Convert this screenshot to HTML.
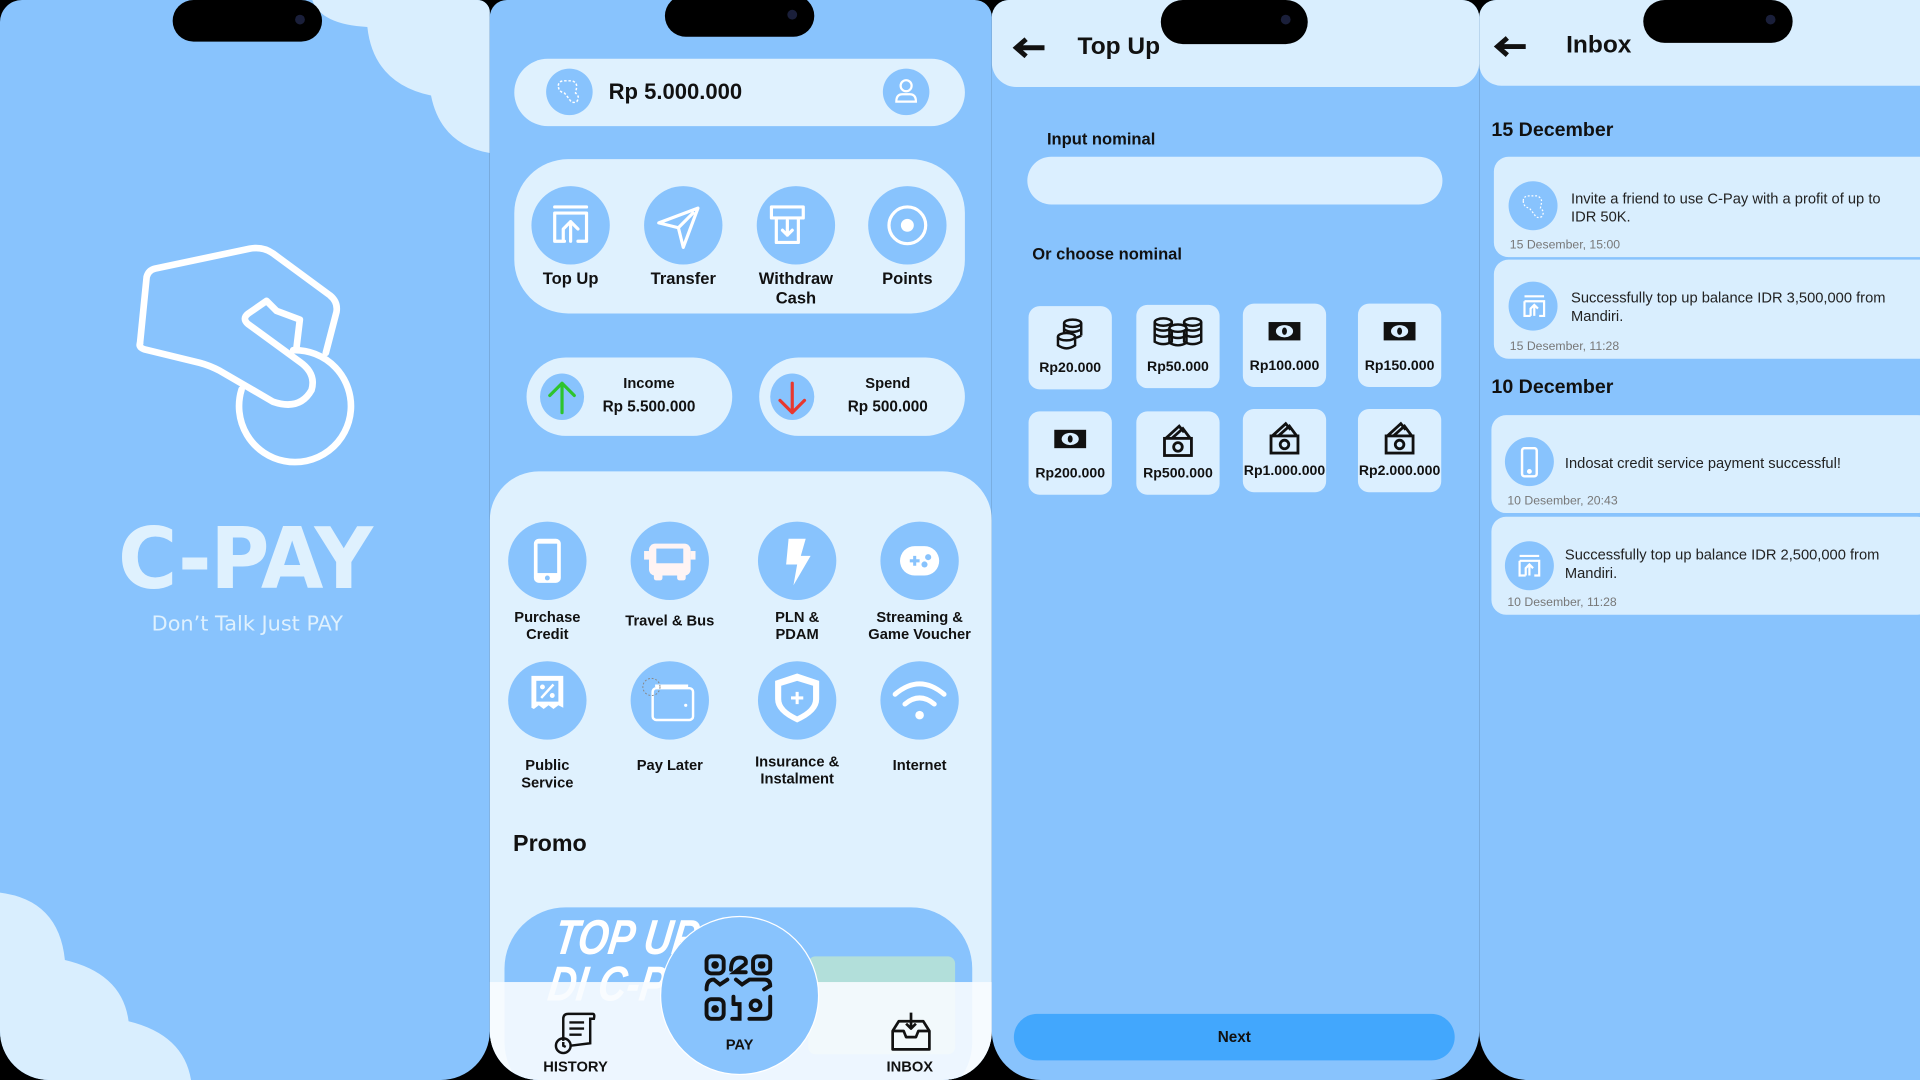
<!DOCTYPE html>
<html><head><meta charset="utf-8">
<style>
*{margin:0;padding:0;box-sizing:border-box}
html,body{width:1920px;height:1080px;overflow:hidden;background:#000;font-family:"Liberation Sans",Arial,sans-serif}
#w{position:absolute;left:0;top:0;width:1568px;height:882px;transform:scale(1.22449);transform-origin:0 0}
.a{position:absolute}
.ph{position:absolute;top:0;height:882px;background:#88c3fd;overflow:hidden}
.notch{position:absolute;background:#000;border-radius:20px;height:34px}
.notch:after{content:"";position:absolute;right:14px;top:12px;width:8px;height:8px;border-radius:50%;background:#1a1f3a}
.lt{background:#dff1fe}
.c{position:absolute;border-radius:50%;background:#88c3fd}
.lbl{position:absolute;text-align:center;font-weight:bold;color:#111;font-size:13.5px;line-height:16px}
.sl{position:absolute;text-align:center;font-weight:bold;color:#111;font-size:12px;line-height:14px}
.tile{position:absolute;width:68px;height:68px;border-radius:9px;background:#dbefff;text-align:center}
.tile span{position:absolute;left:0;right:0;bottom:11px;font-size:11.5px;font-weight:bold;color:#111}
.tile svg{position:absolute;left:20px;top:9px}
.card{position:absolute;left:12px;width:360px;background:#d9eefe;border-radius:12px}
.card .ic{position:absolute;left:12px;top:18px;width:40px;height:40px;border-radius:50%;background:#88c3fd}
.card .t{position:absolute;left:63px;font-size:12px;color:#222;line-height:15px}
.card .d{position:absolute;left:13px;bottom:4px;font-size:10px;color:#777}
.hd{font-weight:bold;color:#111}
</style></head><body><div id="w">

<!-- PHONE 1 -->
<div class="ph" style="left:0;width:400px;border-radius:18px 10px 40px 40px">
 <svg class="a" style="left:0;top:0" width="400" height="882">
  <path d="M255,0 Q262,20 300,22 Q305,68 352,78 Q360,118 400,125 L400,0Z" fill="#d9eefe"/>
  <path d="M0,729 Q48,735 53,784 Q100,795 105,834 Q150,845 156,882 L0,882Z" fill="#d9eefe"/>
 </svg>
 <div class="notch" style="left:141px;top:0;width:122px"></div>
 <svg class="a" style="left:98px;top:188px" width="204" height="196" viewBox="0 0 750 720" fill="none" stroke="#fff" stroke-width="20" stroke-linejoin="round" stroke-linecap="round">
  <path d="M60,340 L80,140 Q85,120 105,115 L390,55 Q430,48 460,70 L630,195 Q655,215 650,245 L618,368"/>
  <path d="M60,340 Q55,352 75,358 L240,398 Q270,406 300,422 L460,515 Q540,542 575,480 Q590,430 540,395 L385,282 Q365,265 385,250 L440,212 L470,242 L540,268 L530,352"/>
  <path d="M365,478 A168,168 0 1 0 520,360"/>
 </svg>
 <div class="a" style="left:0;width:400px;top:418px;text-align:center;font-family:'DejaVu Sans',sans-serif;font-weight:bold;font-size:66px;color:#dff1fe;letter-spacing:-1px;transform:scaleY(1.05)">C-PAY</div>
 <div class="a" style="left:0;width:404px;top:500px;text-align:center;font-family:'DejaVu Sans',sans-serif;font-size:17px;color:#dff1fe">Don’t Talk Just PAY</div>
</div>

<!-- PHONE 2 -->
<div class="ph" style="left:400px;width:410px;border-radius:14px 14px 40px 40px">
 <div class="notch" style="left:143px;top:-4px;width:122px"></div>
 <div class="a lt" style="left:20px;top:48px;width:368px;height:55px;border-radius:28px"></div>
 <div class="c" style="left:46px;top:56px;width:38px;height:38px"></div>
 <svg class="a" style="left:52px;top:62px" width="26" height="26" viewBox="0 0 26 26" fill="none" stroke="#fff" stroke-width="1.2" stroke-dasharray="2 1.5"><path d="M4,8 Q4,4 9,4 L15,4 Q19,5 19,9 L18,14 Q22,17 19,21 Q15,23 13,19 L9,14 Q4,13 4,8Z"/></svg>
 <div class="a" style="left:97px;top:65px;font-size:18px;font-weight:bold;color:#111">Rp 5.000.000</div>
 <div class="c" style="left:321px;top:56px;width:38px;height:38px"></div>
 <svg class="a" style="left:328px;top:62px" width="24" height="24" viewBox="0 0 24 24" fill="none" stroke="#fff" stroke-width="1.8"><circle cx="12" cy="8" r="4.5"/><path d="M4,21 Q4,15 9,15 L15,15 Q20,15 20,21Z"/></svg>

 <div class="a lt" style="left:20px;top:130px;width:368px;height:126px;border-radius:44px"></div>
 <div class="c" style="left:34px;top:152px;width:64px;height:64px"></div>
 <div class="c" style="left:126px;top:152px;width:64px;height:64px"></div>
 <div class="c" style="left:218px;top:152px;width:64px;height:64px"></div>
 <div class="c" style="left:309px;top:152px;width:64px;height:64px"></div>
 <svg class="a" style="left:34px;top:152px" width="350" height="64" fill="none" stroke="#fff" stroke-width="2.6" stroke-linecap="round" stroke-linejoin="round">
  <path d="M19,20 L45,20 M19,25 L45,25 L45,48 L38,48 M27,48 L19,48 L19,25 M26,48 L26,38 L32,32 L38,38 M32,32 L32,48" transform="translate(0,-3)"/>
  <path d="M104,30 L136,18 L124,50 L120,34Z M120,34 L132,22" />
  <path d="M196,17 L222,17 L222,26 L196,26Z M200,26 L200,46 L218,46 L218,26 M209,28 L209,40 M205,36 L209,40 L213,36"/>
  <circle cx="307" cy="32" r="15"/><circle cx="307" cy="32" r="4" fill="#fff"/>
 </svg>
 <div class="lbl" style="left:28px;width:76px;top:220px">Top Up</div>
 <div class="lbl" style="left:120px;width:76px;top:220px">Transfer</div>
 <div class="lbl" style="left:208px;width:84px;top:220px">Withdraw<br>Cash</div>
 <div class="lbl" style="left:303px;width:76px;top:220px">Points</div>

 <div class="a lt" style="left:30px;top:292px;width:168px;height:64px;border-radius:32px"></div>
 <div class="a lt" style="left:220px;top:292px;width:168px;height:64px;border-radius:32px"></div>
 <div class="c" style="left:41px;top:305px;width:36px;height:38px"></div>
 <div class="c" style="left:229px;top:305px;width:36px;height:38px"></div>
 <svg class="a" style="left:41px;top:305px" width="230" height="38" fill="none" stroke-width="2.6" stroke-linecap="round" stroke-linejoin="round">
  <path d="M18,32 L18,8 M8,18 L18,8 L28,18" stroke="#2dc42d"/>
  <path d="M206,8 L206,32 M196,22 L206,32 L216,22" stroke="#e8372e"/>
 </svg>
 <div class="lbl" style="left:80px;width:100px;top:305px;font-size:12px">Income</div>
 <div class="lbl" style="left:80px;width:100px;top:324px;font-size:12.5px">Rp 5.500.000</div>
 <div class="lbl" style="left:275px;width:100px;top:305px;font-size:12px">Spend</div>
 <div class="lbl" style="left:275px;width:100px;top:324px;font-size:12.5px">Rp 500.000</div>

 <div class="a lt" style="left:0;top:385px;width:410px;height:500px;border-radius:40px 40px 0 0"></div>
 <div class="c" style="left:15px;top:426px;width:64px;height:64px"></div>
 <div class="c" style="left:115px;top:426px;width:64px;height:64px"></div>
 <div class="c" style="left:219px;top:426px;width:64px;height:64px"></div>
 <div class="c" style="left:319px;top:426px;width:64px;height:64px"></div>
 <div class="c" style="left:15px;top:540px;width:64px;height:64px"></div>
 <div class="c" style="left:115px;top:540px;width:64px;height:64px"></div>
 <div class="c" style="left:219px;top:540px;width:64px;height:64px"></div>
 <div class="c" style="left:319px;top:540px;width:64px;height:64px"></div>
 <svg class="a" style="left:0;top:426px" width="410" height="180">
  <rect x="36" y="14" width="22" height="36" rx="4" fill="#fff"/><rect x="39" y="18" width="16" height="24" fill="#88c3fd"/><circle cx="47" cy="46" r="2" fill="#88c3fd"/>
  <rect x="130" y="18" width="34" height="26" rx="5" fill="#fff4f4"/><rect x="126" y="24" width="4" height="7" fill="#fff4f4"/><rect x="164" y="24" width="4" height="7" fill="#fff4f4"/><rect x="136" y="22" width="22" height="12" fill="#88c3fd"/><rect x="134" y="42" width="7" height="6" rx="2" fill="#fff4f4"/><rect x="153" y="42" width="7" height="6" rx="2" fill="#fff4f4"/>
  <path d="M244,14 L258,14 L254,28 L262,28 L248,52 L251,35 L242,35Z" fill="#fff"/>
  <rect x="335" y="20" width="32" height="24" rx="12" fill="#fff"/><path d="M343,32 h8 M347,28 v8" stroke="#88c3fd" stroke-width="2.5"/><circle cx="358" cy="29" r="2.5" fill="#88c3fd"/><circle cx="355" cy="35" r="2.5" fill="#88c3fd"/>
  <path d="M34,126 L60,126 L60,152 L56,150 L52,153 L48,150 L44,153 L40,150 L36,153 L34,152Z" fill="#fff"/><rect x="38" y="130" width="18" height="17" fill="#88c3fd"/><path d="M42,144 L52,133" stroke="#fff" stroke-width="2"/><circle cx="43" cy="135" r="2" fill="#fff"/><circle cx="51" cy="142" r="2" fill="#fff"/>
  <rect x="133" y="136" width="33" height="26" rx="3" fill="none" stroke="#fff" stroke-width="2"/><path d="M135,134 L162,134" stroke="#fff" stroke-width="2"/><circle cx="160" cy="150" r="1.3" fill="#fff"/><circle cx="132" cy="135" r="7" fill="none" stroke="#888" stroke-width="0.8" stroke-dasharray="1.5 1.5"/>
  <path d="M251,124 L269,130 L269,145 Q269,156 251,164 Q233,156 233,145 L233,130Z" fill="#fff"/><path d="M251,130 L264,134 L264,145 Q264,153 251,159 Q238,153 238,145 L238,134Z" fill="#88c3fd"/><path d="M246,144 h10 M251,139 v10" stroke="#fff" stroke-width="2.5"/>
  <path d="M331,141 Q351,124 371,141" fill="none" stroke="#fff" stroke-width="4" stroke-linecap="round"/><path d="M339,149 Q351,139 363,149" fill="none" stroke="#fff" stroke-width="4" stroke-linecap="round"/><circle cx="351" cy="158" r="3.5" fill="#fff"/>
 </svg>
 <div class="sl" style="left:7px;width:80px;top:497px">Purchase<br>Credit</div>
 <div class="sl" style="left:102px;width:90px;top:500px">Travel &amp; Bus</div>
 <div class="sl" style="left:211px;width:80px;top:497px">PLN &amp;<br>PDAM</div>
 <div class="sl" style="left:301px;width:100px;top:497px">Streaming &amp;<br>Game Voucher</div>
 <div class="sl" style="left:7px;width:80px;top:618px">Public<br>Service</div>
 <div class="sl" style="left:107px;width:80px;top:618px">Pay Later</div>
 <div class="sl" style="left:201px;width:100px;top:615px">Insurance &amp;<br>Instalment</div>
 <div class="sl" style="left:311px;width:80px;top:618px">Internet</div>
 <div class="a" style="left:19px;top:679px;font-size:19px;font-weight:bold;color:#111">Promo</div>

 <div class="a" style="left:12px;top:741px;width:382px;height:160px;border-radius:50px;background:#88c3fd;overflow:hidden">
  <div class="a" style="left:44px;top:6px;font-size:40px;font-weight:bold;font-style:italic;color:#fff;line-height:38px;transform:skewX(-8deg) scaleX(.8);transform-origin:0 0">TOP UP<br>DI C-PAY</div>
  <div class="a" style="left:248px;top:40px;width:120px;height:80px;background:#b2dfda;border-radius:6px"></div>
 </div>
 <div class="a" style="left:0;top:802px;width:410px;height:80px;background:rgba(248,252,255,.9)"></div>
 <div class="a" style="left:139px;top:748px;width:130px;height:130px;border-radius:50%;background:#88c3fd;border:1.5px solid #fff"></div>
 <svg class="a" style="left:574px;top:0;transform:translateX(-400px)" width="1" height="1"></svg>
 <svg class="a" style="left:174px;top:778px" width="60" height="58" fill="none" stroke="#111" stroke-width="3.2" stroke-linecap="round">
  <rect x="3" y="3" width="14" height="14" rx="4"/><circle cx="10" cy="10" r="1.5" fill="#111"/>
  <rect x="41" y="3" width="14" height="14" rx="4"/><circle cx="48" cy="10" r="1.5" fill="#111"/>
  <path d="M23,14 Q23,4 30,4 Q36,4 35,9 L26,16 L35,16"/>
  <path d="M3,30 Q3,22 9,22 L14,26 L20,22 M27,22 L32,26 L38,22 L50,22 Q55,22 55,27 L50,30"/>
  <rect x="3" y="38" width="14" height="16" rx="4"/><circle cx="10" cy="46" r="1.5" fill="#111"/>
  <path d="M25,36 L25,42 M25,42 L30,42 L30,54 L24,54"/>
  <circle cx="43" cy="43" r="4"/><path d="M55,36 L55,50 Q55,54 50,54 L38,54"/>
 </svg>
 <div class="a" style="left:139px;width:130px;top:846px;text-align:center;font-size:12px;font-weight:bold;color:#111">PAY</div>
 <svg class="a" style="left:50px;top:826px" width="40" height="36" fill="none" stroke="#111" stroke-width="2">
  <path d="M10,24 L10,6 Q10,2 14,2 L34,2 Q36,2 35,6 L32,6 L32,26 L16,28"/><path d="M15,9 h12 M15,14 h12 M15,19 h10"/><circle cx="10" cy="28" r="6"/><path d="M10,25 L10,28 L12,29"/>
 </svg>
 <div class="a" style="left:40px;width:60px;top:864px;text-align:center;font-size:12px;font-weight:bold;color:#111">HISTORY</div>
 <svg class="a" style="left:326px;top:826px" width="36" height="34" fill="none" stroke="#111" stroke-width="2.2" stroke-linejoin="round">
  <path d="M3,16 L8,8 L28,8 L33,16 L33,31 L3,31Z M3,16 L12,16 L14,21 L22,21 L24,16 L33,16"/><path d="M18,1 L18,14 M14,10 L18,14 L22,10"/>
 </svg>
 <div class="a" style="left:313px;width:60px;top:864px;text-align:center;font-size:12px;font-weight:bold;color:#111">INBOX</div>
</div>

<!-- PHONE 3 -->
<div class="ph" style="left:810px;width:398px;border-radius:14px 14px 40px 40px">
 <div class="a" style="left:0;top:0;width:398px;height:71px;background:#d9eefe;border-radius:0 0 20px 20px"></div>
 <div class="notch" style="left:138px;top:0;width:120px;height:36px"></div>
 <svg class="a" style="left:15px;top:30px" width="30" height="18"><path d="M28,9 H6 M13,2 L5,9 L13,16" stroke="#111" stroke-width="4" fill="none"/></svg>
 <div class="a hd" style="left:70px;top:27px;font-size:20px">Top Up</div>
 <div class="a hd" style="left:45px;top:106px;font-size:13.5px">Input nominal</div>
 <div class="a" style="left:29px;top:128px;width:339px;height:39px;border-radius:20px;background:#dbefff"></div>
 <div class="a hd" style="left:33px;top:200px;font-size:13.5px">Or choose nominal</div>
 <div class="tile" style="left:30px;top:250px"><svg width="28" height="28" viewBox="0 0 28 28" fill="none" stroke="#111" stroke-width="2"><ellipse cx="16" cy="5" rx="7" ry="3"/><path d="M9,5 v10 M23,5 v10 M9,10 q7,4 14,0 M9,15 q7,4 14,0"/><ellipse cx="11" cy="16" rx="7" ry="3" fill="#dbefff"/><path d="M4,16 v7 q7,5 14,0 v-7"/></svg><span>Rp20.000</span></div>
 <div class="tile" style="left:118px;top:249px"><svg style="left:10px" width="48" height="28" viewBox="0 0 48 28" fill="none" stroke="#111" stroke-width="2"><ellipse cx="12" cy="5" rx="7" ry="3"/><path d="M5,5 v16 q7,4 14,0 v-16 M5,10 q7,4 14,0 M5,15 q7,4 14,0"/><ellipse cx="36" cy="5" rx="7" ry="3"/><path d="M29,5 v16 q7,4 14,0 v-16 M29,10 q7,4 14,0 M29,15 q7,4 14,0"/><ellipse cx="24" cy="10" rx="7" ry="3" fill="#dbefff"/><path d="M17,10 v12 q7,4 14,0 v-12 M17,16 q7,4 14,0"/></svg><span>Rp50.000</span></div>
 <div class="tile" style="left:205px;top:248px"><svg width="28" height="26"><rect x="1" y="6" width="26" height="15" fill="#111"/><ellipse cx="14" cy="13.5" rx="7" ry="5" fill="#dbefff"/><ellipse cx="14" cy="13.5" rx="2" ry="3" fill="#111"/></svg><span>Rp100.000</span></div>
 <div class="tile" style="left:299px;top:248px"><svg width="28" height="26"><rect x="1" y="6" width="26" height="15" fill="#111"/><ellipse cx="14" cy="13.5" rx="7" ry="5" fill="#dbefff"/><ellipse cx="14" cy="13.5" rx="2" ry="3" fill="#111"/></svg><span>Rp150.000</span></div>
 <div class="tile" style="left:30px;top:336px"><svg width="28" height="26"><rect x="1" y="6" width="26" height="15" fill="#111"/><ellipse cx="14" cy="13.5" rx="7" ry="5" fill="#dbefff"/><ellipse cx="14" cy="13.5" rx="2" ry="3" fill="#111"/></svg><span>Rp200.000</span></div>
 <div class="tile" style="left:118px;top:336px"><svg width="28" height="30" viewBox="0 0 28 30" fill="none" stroke="#111" stroke-width="2.3"><path d="M4,13 L15,3 L19,8 M9,13 L18,5 L24,13"/><rect x="3" y="13" width="22" height="14"/><circle cx="14" cy="20" r="3.5"/></svg><span>Rp500.000</span></div>
 <div class="tile" style="left:205px;top:334px"><svg width="28" height="30" viewBox="0 0 28 30" fill="none" stroke="#111" stroke-width="2.3"><path d="M4,13 L15,3 L19,8 M9,13 L18,5 L24,13"/><rect x="3" y="13" width="22" height="14"/><circle cx="14" cy="20" r="3.5"/></svg><span>Rp1.000.000</span></div>
 <div class="tile" style="left:299px;top:334px"><svg width="28" height="30" viewBox="0 0 28 30" fill="none" stroke="#111" stroke-width="2.3"><path d="M4,13 L15,3 L19,8 M9,13 L18,5 L24,13"/><rect x="3" y="13" width="22" height="14"/><circle cx="14" cy="20" r="3.5"/></svg><span>Rp2.000.000</span></div>
 <div class="a" style="left:18px;top:828px;width:360px;height:38px;border-radius:19px;background:#42a7fd;text-align:center;line-height:38px;font-size:12.5px;font-weight:bold;color:#111">Next</div>
</div>

<!-- PHONE 4 -->
<div class="ph" style="left:1208px;width:360px;border-radius:14px 0 0 40px">
 <div class="a" style="left:0;top:0;width:360px;height:70px;background:#d9eefe;border-radius:0 0 0 18px"></div>
 <div class="notch" style="left:134px;top:0;width:122px;height:35px"></div>
 <svg class="a" style="left:10px;top:29px" width="30" height="18"><path d="M28,9 H6 M13,2 L5,9 L13,16" stroke="#111" stroke-width="4" fill="none"/></svg>
 <div class="a hd" style="left:71px;top:26px;font-size:20px">Inbox</div>
 <div class="a hd" style="left:10px;top:98px;font-size:16px">15 December</div>
 <div class="card" style="top:128px;height:82px"><div class="ic" style="top:20px"></div>
  <svg class="a" style="left:20px;top:28px" width="24" height="24" fill="none" stroke="#fff" stroke-width="1" stroke-dasharray="1.5 1.5"><path d="M4,8 Q4,4 9,4 L15,4 Q19,5 19,9 L18,14 Q22,17 19,21 Q15,23 13,19 L9,14 Q4,13 4,8Z"/></svg>
  <div class="t" style="top:27px">Invite a friend to use C-Pay with a profit of up to<br>IDR 50K.</div><div class="d">15 Desember, 15:00</div></div>
 <div class="card" style="top:212px;height:81px"><div class="ic" style="top:18px"></div>
  <svg class="a" style="left:21px;top:26px" width="24" height="24" fill="none" stroke="#fff" stroke-width="1.8"><path d="M4,4 H20 M4,8 H20 V20 H16 M9,20 H4 V8 M9,20 V14 L12,11 L15,14 M12,11 V20"/></svg>
  <div class="t" style="top:24px">Successfully top up balance IDR 3,500,000 from<br>Mandiri.</div><div class="d">15 Desember, 11:28</div></div>
 <div class="a hd" style="left:10px;top:308px;font-size:16px">10 December</div>
 <div class="card" style="left:10px;top:339px;height:80px"><div class="ic" style="left:11px;top:18px"></div>
  <svg class="a" style="left:23px;top:26px" width="16" height="26" fill="none" stroke="#fff" stroke-width="2"><rect x="2" y="1" width="12" height="23" rx="2"/><circle cx="8" cy="20" r="1" fill="#fff"/></svg>
  <div class="t" style="left:60px;top:32px">Indosat credit service payment successful!</div><div class="d">10 Desember, 20:43</div></div>
 <div class="card" style="left:10px;top:422px;height:80px"><div class="ic" style="left:11px;top:20px"></div>
  <svg class="a" style="left:19px;top:28px" width="24" height="24" fill="none" stroke="#fff" stroke-width="1.8"><path d="M4,4 H20 M4,8 H20 V20 H16 M9,20 H4 V8 M9,20 V14 L12,11 L15,14 M12,11 V20"/></svg>
  <div class="t" style="left:60px;top:24px">Successfully top up balance IDR 2,500,000 from<br>Mandiri.</div><div class="d">10 Desember, 11:28</div></div>
</div>

</div></body></html>
